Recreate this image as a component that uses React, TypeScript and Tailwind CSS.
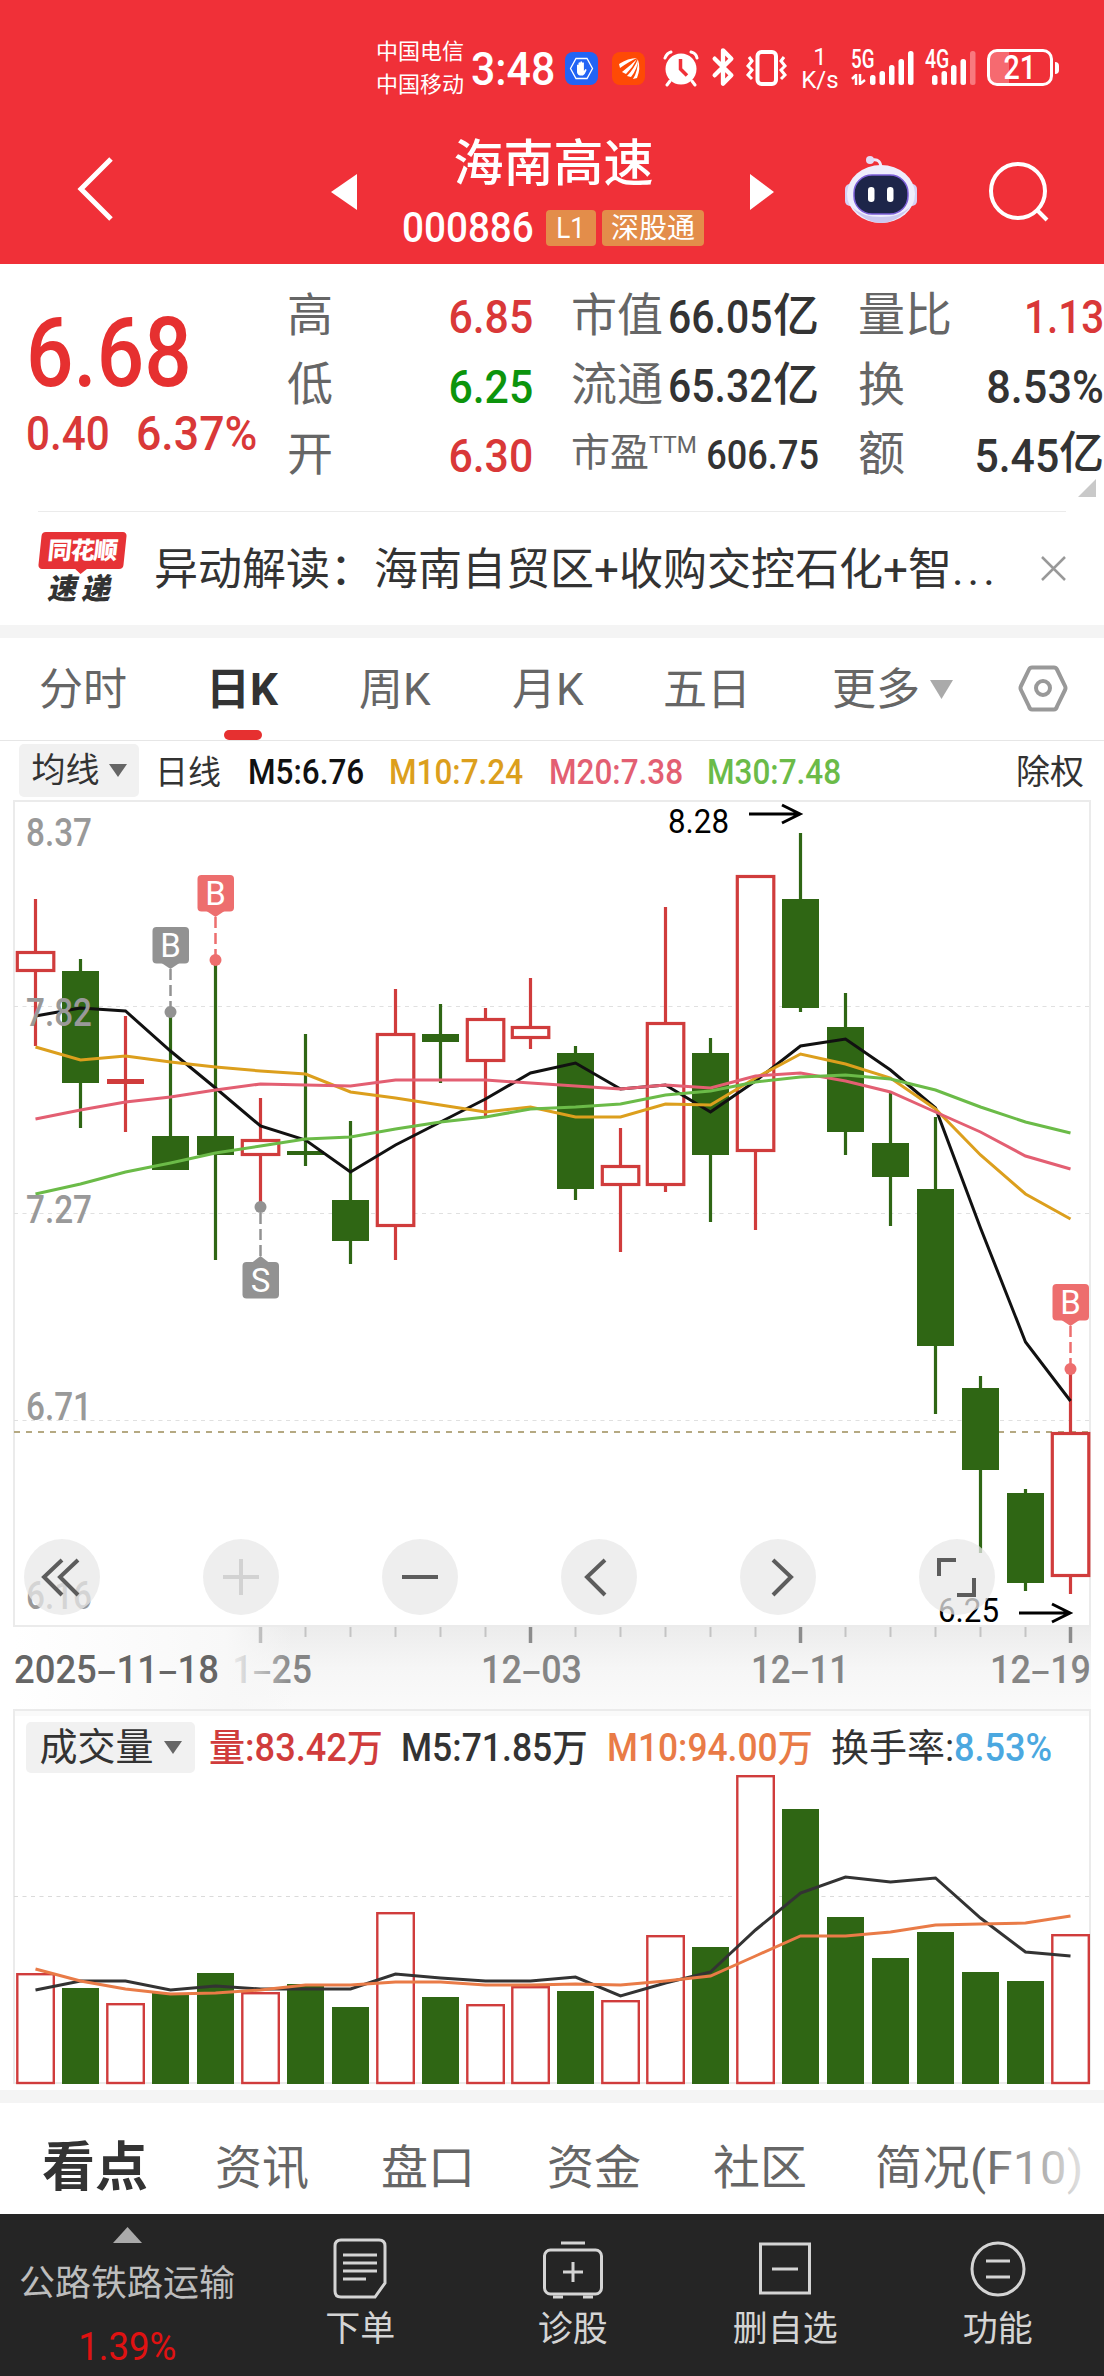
import React from "react";
import { Bluetooth } from "lucide-react";

type Candle = { up: boolean; high: number; top: number; bottom: number; low: number; vol: number };

const c = (up: boolean, high: number, top: number, bottom: number, low: number, vol: number): Candle => ({
  up, high, top, bottom, low, vol,
});

const candles: Candle[] = [
  c(true, 899, 951, 972, 1046, 1973),
  c(false, 959, 971, 1083, 1128, 1988),
  c(true, 1016, 1079, 1084, 1132, 2003),
  c(false, 1012, 1136, 1170, 1170, 1993),
  c(false, 959, 1136, 1155, 1260, 1973),
  c(true, 1098, 1139, 1156, 1207, 1992),
  c(false, 1034, 1151, 1155, 1166, 1984),
  c(false, 1121, 1200, 1241, 1264, 2007),
  c(true, 989, 1033, 1227, 1260, 1912),
  c(false, 1004, 1034, 1042, 1083, 1997),
  c(true, 1008, 1018, 1062, 1116, 2004),
  c(true, 978, 1026, 1039, 1049, 1986),
  c(false, 1046, 1053, 1189, 1200, 1991),
  c(true, 1128, 1165, 1186, 1252, 2000),
  c(true, 907, 1022, 1186, 1192, 1935),
  c(false, 1038, 1053, 1155, 1222, 1947),
  c(true, 875, 875, 1152, 1230, 1775),
  c(false, 833, 899, 1008, 1012, 1809),
  c(false, 993, 1027, 1132, 1155, 1917),
  c(false, 1093, 1143, 1177, 1226, 1958),
  c(false, 1117, 1189, 1346, 1414, 1932),
  c(false, 1376, 1388, 1470, 1553, 1972),
  c(false, 1489, 1493, 1583, 1591, 1981),
  c(true, 1369, 1432, 1577, 1594, 1934),
];

const priceLines = [
  {
    color: "#111111",
    ys: [1016, 1008, 1011, 1051, 1088, 1126, 1140, 1172, 1145, 1122, 1099, 1073, 1063, 1089, 1085, 1112, 1081, 1046, 1039, 1070, 1108, 1228, 1342, 1401],
  },
  {
    color: "#dc9f1d",
    ys: [1047, 1060, 1056, 1062, 1067, 1071, 1074, 1092, 1098, 1105, 1112, 1107, 1117, 1117, 1104, 1105, 1078, 1054, 1064, 1078, 1109, 1155, 1194, 1219],
  },
  {
    color: "#e35f72",
    ys: [1119, 1110, 1102, 1097, 1090, 1084, 1085, 1086, 1080, 1080, 1080, 1083, 1086, 1089, 1085, 1088, 1076, 1073, 1081, 1092, 1112, 1132, 1156, 1169],
  },
  {
    color: "#6bbb48",
    ys: [1194, 1184, 1172, 1163, 1153, 1146, 1139, 1137, 1129, 1122, 1117, 1109, 1107, 1104, 1095, 1091, 1082, 1077, 1075, 1079, 1090, 1107, 1122, 1133],
  },
];

const volLines = [
  {
    color: "#333333",
    ys: [1990, 1981, 1981, 1990, 1986, 1989, 1989, 1989, 1974, 1978, 1981, 1981, 1977, 1996, 1983, 1972, 1930, 1893, 1877, 1882, 1878, 1918, 1952, 1956],
  },
  {
    color: "#e97b47",
    ys: [1969, 1981, 1989, 1994, 1993, 1990, 1985, 1985, 1982, 1982, 1985, 1985, 1984, 1985, 1981, 1976, 1956, 1936, 1936, 1932, 1925, 1924, 1923, 1916],
  },
];

const RED = "#d03c3c";
const GREEN = "#2f6614";

const cx = (i: number) => 35.5 + i * 45;
const toPoints = (ys: number[]) => ys.map((y, i) => `${cx(i)},${y}`).join(" ");

// horizontally condensed run of digits
const Num = ({ children, className = "scale-x-[0.87]" }: { children: React.ReactNode; className?: string }) => (
  <span className={`inline-block whitespace-nowrap ${className}`}>{children}</span>
);

const SignalBars = ({ last }: { last: string }) => (
  <svg width="44" height="34" viewBox="0 0 44 34" fill="#fff">
    <rect x="0" y="24" width="5.5" height="10" rx="2.5" />
    <rect x="9.5" y="20" width="5.5" height="14" rx="2.5" />
    <rect x="19" y="14" width="5.5" height="20" rx="2.5" />
    <rect x="28.5" y="8" width="5.5" height="26" rx="2.5" />
    <rect x="38" y="0" width="5.5" height="34" rx="2.5" fill={last} />
  </svg>
);

const StatusBar = () => (
  <div className="flex h-[120px] items-start pl-[376px] pt-[38px] text-white">
    <div className="flex w-[95px] flex-col gap-[11px] pt-[3px] text-[22px] leading-[22px]">
      <span>中国电信</span>
      <span>中国移动</span>
    </div>
    <div className="w-[94px] pt-[8px] text-[46px] font-medium leading-[46px]">
      <Num className="origin-left scale-x-[0.93]">3:48</Num>
    </div>
    <svg className="mt-[13px]" width="34" height="36" viewBox="0 0 34 36">
      <rect x="0" y="1" width="33" height="33" rx="8" fill="#2264f5" />
      <path d="M11 7.500h11l5.500 10-5.500 10H11L5.500 17.500z" fill="none" stroke="#fff" strokeWidth="1.300" />
      <path d="M12 17v-3q1-1 1.500 0v2-4q1-1.500 1.800 0v-1q1-1.300 1.800 0v1q1-1.300 1.800 0v8l1.500-2q1.600 0 1 1.500-1.500 4-3.500 5h-3q-3-1-2.900-4z" fill="#fff" />
    </svg>
    <svg className="ml-[13px] mt-[13px]" width="34" height="36" viewBox="0 0 34 36">
      <rect x="0" y="1" width="33" height="33" rx="8" fill="#fe4a05" />
      <path d="M7 13q9-6 18-6-7 3-17 10zM10 21q9-7 15-13-4 8-11 15zM15 25q7-7 11-17 0 9-7 18zM21 28q5-8 5-19 3 8-1 18z" fill="#fff" />
    </svg>
    <svg className="ml-[17px] mt-[12px]" width="38" height="37" viewBox="0 0 38 37">
      <circle cx="18" cy="19" r="15.500" fill="#fff" />
      <path d="M17.500 9v10l6.500 6.500" fill="none" stroke="#f03038" strokeWidth="3.500" />
      <path d="M2 8q2-5 6-6M28 2q5 1 6 6M7 31l-3 4M29 31l3 4" stroke="#fff" strokeWidth="3" strokeLinecap="round" fill="none" />
    </svg>
    <Bluetooth className="ml-[2px] mt-[9px] shrink-0" size={40} strokeWidth={2.6} />
    <svg className="ml-[2px] mt-[12px]" width="44" height="36" viewBox="0 0 44 36" fill="none" stroke="#fff">
      <rect x="12.500" y="2" width="18.500" height="32" rx="4" strokeWidth="4" />
      <path d="M4 7l3 4-4 5 4 4-4 5 4 4M39 7l-3 4 4 5-4 4 4 5-4 4" strokeWidth="3" />
    </svg>
    <div className="ml-[12px] mt-[8px] flex w-[38px] flex-col items-center text-[24px] leading-[23px]">
      <span>1</span>
      <span>K/s</span>
    </div>
    <div className="relative ml-[31px] mt-[13px]">
      <SignalBars last="#fff" />
      <span className="absolute -left-[19px] -top-[3px] text-[25px] font-medium leading-[23px]">
        <Num className="origin-left scale-x-[0.75]">5G</Num>
      </span>
      <svg className="absolute -left-[19px] top-[23px]" width="17" height="11" viewBox="0 0 17 11" fill="none" stroke="#fff" strokeWidth="2.500">
        <path d="M1 5l4-4v10M9 0v10l5-4" />
      </svg>
    </div>
    <div className="relative ml-[18px] mt-[13px]">
      <SignalBars last="#f8797e" />
      <span className="absolute -left-[7px] -top-[3px] text-[25px] font-medium leading-[23px]">
        <Num className="origin-left scale-x-[0.78]">4G</Num>
      </span>
    </div>
    <div className="ml-[11px] mt-[11px] flex items-center">
      <div className="flex h-[37px] w-[66px] items-center justify-center rounded-[10px] border-[3px] border-white bg-linear-to-r from-[#f66a70] from-32% to-transparent to-32% text-[33px] font-medium leading-none">
        <Num>21</Num>
      </div>
      <div className="ml-[2px] h-3 w-1 rounded-r bg-white" />
    </div>
  </div>
);

const Robot = () => (
  <svg width="74" height="70" viewBox="0 0 74 70">
    <path d="M28 5q9-2 9 9" fill="none" stroke="#f0e8fa" strokeWidth="3" />
    <circle cx="26" cy="5" r="4" fill="#e4dcf6" />
    <rect x="1" y="29" width="10" height="22" rx="5" fill="#d5d1f5" />
    <rect x="63" y="29" width="10" height="22" rx="5" fill="#d5d1f5" />
    <ellipse cx="37" cy="39" rx="34" ry="29" fill="#eeedfc" />
    <path d="M8 52q12 15 29 16 17-1 29-16-10 10-29 10T8 52z" fill="#cbc8f0" />
    <rect x="10" y="20" width="54" height="39" rx="18" fill="#1d2549" stroke="#7c5fd8" strokeWidth="1.500" />
    <rect x="24" y="32" width="6.500" height="15" rx="3.200" fill="#fff" />
    <rect x="43" y="32" width="6.500" height="15" rx="3.200" fill="#fff" />
  </svg>
);

const Header = () => (
  <header className="h-[264px] bg-[#f03038]">
    <StatusBar />
    <div className="flex h-[144px] text-white">
      <svg className="ml-[73px] mt-[36px]" width="44" height="66" viewBox="0 0 44 66">
        <path d="M38 3L8 33l30 30" fill="none" stroke="#fff" strokeWidth="5" />
      </svg>
      <svg className="ml-[214px] mt-[54px]" width="26" height="36" viewBox="0 0 26 36">
        <path d="M26 0v36L0 18z" fill="#fff" />
      </svg>
      <div className="flex w-[393px] flex-col items-center">
        <h1 className="mt-[19px] text-[50px] font-medium leading-[50px]">海南高速</h1>
        <div className="mt-[21px] flex w-full items-center pl-[45px]">
          <div className="w-[144px] text-[42px] font-medium leading-[36px]">
            <Num className="origin-left scale-x-[0.92]">000886</Num>
          </div>
          <div className="h-9 w-[50px] rounded-[4px] bg-[#e38d4a] text-center text-[30px] leading-[36px]">
            <Num>L1</Num>
          </div>
          <div className="ml-[6px] h-9 w-[102px] rounded-[4px] bg-[#e38d4a] text-center text-[28px] leading-[37px]">深股通</div>
        </div>
      </div>
      <svg className="mt-[54px]" width="24" height="36" viewBox="0 0 24 36">
        <path d="M0 0v36l24-18z" fill="#fff" />
      </svg>
      <div className="ml-[70px] mt-[35px]">
        <Robot />
      </div>
      <svg className="ml-[70px] mt-[40px]" width="64" height="64" viewBox="0 0 64 64" fill="none" stroke="#fff" strokeWidth="4">
        <circle cx="30" cy="31" r="27" />
        <path d="M49 50l10 10" />
      </svg>
    </div>
  </header>
);

const priceCol = [
  { label: "高", value: "6.85", color: "text-[#d93838]" },
  { label: "低", value: "6.25", color: "text-[#0c940c]" },
  { label: "开", value: "6.30", color: "text-[#d93838]" },
];

const Quote = () => (
  <section className="relative flex h-[247px] whitespace-nowrap text-[#333]">
    <div className="w-[287px] pl-[26px]">
      <div className="mt-[41px] h-[96px] text-[96px] font-medium leading-[96px] text-[#e63030]">
        <Num className="origin-left scale-x-[0.87]">6.68</Num>
      </div>
      <div className="mt-[9px] flex text-[48px] font-medium leading-[48px] text-[#d93838]">
        <div className="w-[110px]">
          <Num className="origin-left scale-x-[0.88]">0.40</Num>
        </div>
        <Num className="origin-left scale-x-[0.93]">6.37%</Num>
      </div>
    </div>
    <div className="flex w-[246px] flex-col pt-[16px]">
      {priceCol.map((row) => (
        <div key={row.label} className="flex h-[69.5px] items-center justify-between text-[47px] leading-none">
          <span className="text-[46px] text-[#666]">{row.label}</span>
          <Num className={`origin-right scale-x-[0.91] pt-1 font-medium ${row.color}`}>{row.value}</Num>
        </div>
      ))}
    </div>
    <div className="ml-[38px] flex w-[248px] flex-col pt-[16px] text-[46px] leading-none">
      {[
        ["市值", "66.05"],
        ["流通", "65.32"],
      ].map(([label, value]) => (
        <div key={label} className="flex h-[69.5px] items-center">
          <span className="w-[98px] text-[#666]">{label}</span>
          <Num className="w-[103px] origin-left scale-x-[0.89] pt-1 font-medium">{value}</Num>
          <span className="ml-[2px] font-medium">亿</span>
        </div>
      ))}
      <div className="flex h-[69.5px] items-center">
        <span className="text-[39px] text-[#666]">市盈</span>
        <span className="mb-[16px] text-[23px] leading-none text-[#666]">TTM</span>
        <div className="flex min-w-0 flex-1 justify-end pt-1 text-[41px] font-medium">
          <Num className="origin-right scale-x-[0.88]">606.75</Num>
        </div>
      </div>
    </div>
    <div className="ml-[39px] flex w-[246px] flex-col pt-[16px] text-[47px] leading-none">
      <div className="flex h-[69.5px] items-center justify-between">
        <span className="text-[#666]">量比</span>
        <Num className="origin-right scale-x-[0.86] pt-1 font-medium text-[#d93838]">1.13</Num>
      </div>
      <div className="flex h-[69.5px] items-center justify-between">
        <span className="text-[#666]">换</span>
        <Num className="origin-right scale-x-[0.92] pt-1 font-medium">8.53%</Num>
      </div>
      <div className="flex h-[69.5px] items-center">
        <span className="text-[#666]">额</span>
        <Num className="ml-auto origin-right scale-x-[0.91] pt-1 font-medium">5.45</Num>
        <span className="text-[45px] font-medium">亿</span>
      </div>
    </div>
    <svg className="absolute right-[8px] top-[215px]" width="18" height="18" viewBox="0 0 18 18">
      <path d="M18 0v18H0z" fill="#c9c9c9" />
    </svg>
  </section>
);

const News = () => (
  <section className="mx-[38px] flex h-[114px] items-start border-t border-[#ebebeb] text-[#333]">
    <div className="mt-[20px] w-[90px]">
      <div className="relative ml-[2px] flex h-[37px] w-[85px] -skew-x-6 items-center justify-center rounded-[4px] bg-[#e63236] text-[24px] font-black leading-none tracking-[-1px] text-white">
        同花顺
        <svg className="absolute -bottom-[5px] left-[36px]" width="14" height="6" viewBox="0 0 14 6">
          <path d="M0 0h14L7 6z" fill="#e63236" />
        </svg>
      </div>
      <div className="ml-[11px] mt-[6px] flex -skew-x-12 gap-[5px] text-[29px] font-black leading-[29px]">
        <span>速</span>
        <span>递</span>
      </div>
    </div>
    <p className="ml-[26px] mt-[35px] w-[860px] whitespace-nowrap text-[44px] leading-[46px]">
      异动解读：海南自贸区+收购交控石化+智<span className="tracking-[4px]">...</span>
    </p>
    <svg className="ml-auto mt-[44px]" width="25" height="25" viewBox="0 0 25 25" stroke="#999" strokeWidth="2.500">
      <path d="M1 1l23 23M24 1L1 24" />
    </svg>
  </section>
);

const periods = [
  { label: "分时", width: "w-[167px]" },
  { label: "日K", width: "w-[153px]", active: true },
  { label: "周K", width: "w-[153px]" },
  { label: "月K", width: "w-[151px]" },
  { label: "五日", width: "w-[169px]" },
];

const PeriodTabs = () => (
  <nav className="flex h-[103px] border-b border-[#e6e6e6] pl-[39px] text-[44px] leading-[44px] text-[#666]">
    {periods.map((p) => (
      <div key={p.label} className={`relative pt-[30px] ${p.width} ${p.active ? "font-bold text-[#333]" : ""}`}>
        {p.label}
        {p.active && <span className="absolute bottom-0 left-[18px] h-[10px] w-[38px] rounded-full bg-[#e63030]" />}
      </div>
    ))}
    <div className="flex items-start pt-[30px]">更多</div>
    <svg className="ml-[10px] mt-[42px]" width="23" height="19" viewBox="0 0 23 19">
      <path d="M0 0h23L11.500 19z" fill="#aaa" />
    </svg>
    <svg className="ml-[65px] mt-[27px]" width="50" height="47" viewBox="0 0 50 47" fill="none" stroke="#999" strokeWidth="4">
      <path d="M14 2.500h22q2 0 3 2l8 16.500q1 2 0 4l-8 16.500q-1 3-3 3H14q-2 0-3-3L3 25q-1-2 0-4l8-16.500q1-2 3-2z" />
      <circle cx="25" cy="23" r="7" />
    </svg>
  </nav>
);

const Caret = () => (
  <svg width="18" height="13" viewBox="0 0 18 13">
    <path d="M0 0h18L9 13z" fill="#666" />
  </svg>
);

const AverageRow = () => (
  <div className="flex h-[59px] items-start pl-[19px] pt-[3px] text-[35px] leading-[57px] text-[#333]">
    <div className="flex h-[53px] w-[120px] items-center justify-center gap-[9px] rounded-[5px] bg-[#f1f1f1] text-[34px]">
      均线
      <Caret />
    </div>
    <div className="ml-[16px] w-[93px] text-[33px]">日线</div>
    <div className="w-[141px] font-medium text-[#111]">
      <Num className="origin-left scale-x-[0.9]">M5:6.76</Num>
    </div>
    <div className="w-[160px] font-medium text-[#dc9f1d]">
      <Num className="origin-left scale-x-[0.9]">M10:7.24</Num>
    </div>
    <div className="w-[158px] font-medium text-[#e35f72]">
      <Num className="origin-left scale-x-[0.9]">M20:7.38</Num>
    </div>
    <div className="w-[309px] font-medium text-[#6bbb48]">
      <Num className="origin-left scale-x-[0.9]">M30:7.48</Num>
    </div>
    <div className="text-[34px]">除权</div>
  </div>
);

const Marker = ({ x, y, dot, letter, color }: { x: number; y: number; dot: number; letter: string; color: string }) => {
  const below = y > dot;
  const tip = below ? y - 6 : y + 42;
  return (
    <g>
      <circle cx={x} cy={dot} r="6" fill={color} />
      <path d={`M${x} ${tip}V${dot}`} stroke={color} strokeWidth="2.500" strokeDasharray="11 5" />
      <rect x={x - 18} y={y} width="36.500" height="36.500" rx="4" fill={color} />
      <path d={below ? `M${x - 9} ${y + 1}h18l-9-7z` : `M${x - 9} ${y + 36}h18l-9 6z`} fill={color} />
      <text x={x} y={y + 30} textAnchor="middle" fontSize="33" fill="#fff">
        {letter}
      </text>
    </g>
  );
};

const Fit = ({ x, y, w, size, fill, children }: { x: number; y: number; w: number; size: number; fill: string; children: string }) => (
  <text x={x} y={y} textLength={w} lengthAdjust="spacingAndGlyphs" fontSize={size} fill={fill}>
    {children}
  </text>
);

const PriceChart = () => (
  <svg className="block overflow-visible" width="1104" height="827" viewBox="0 800 1104 827">
    <rect x="14" y="801" width="1076" height="825" fill="none" stroke="#ebebeb" strokeWidth="2" />
    {[1006.5, 1213.5, 1420.5].map((y) => (
      <path key={y} d={`M14 ${y}H1090`} stroke="#e0e0e0" strokeWidth="1.200" strokeDasharray="4 4.500" />
    ))}
    <path d="M14 1432H1090" stroke="#b5a982" strokeWidth="2" strokeDasharray="6 6" />
    {candles.map((k, i) => {
      const x = cx(i);
      const color = k.up ? RED : GREEN;
      const hollow = k.up && k.bottom - k.top > 6;
      return (
        <g key={i}>
          <path d={`M${x} ${k.high}V${k.top}M${x} ${k.bottom}V${k.low}`} stroke={color} strokeWidth="3.200" />
          {hollow ? (
            <rect x={x - 18.200} y={k.top + 1.500} width="36.500" height={k.bottom - k.top - 3} fill="#fff" stroke={color} strokeWidth="3.200" />
          ) : (
            <rect x={x - 18.500} y={k.top} width="37" height={k.bottom - k.top} fill={color} />
          )}
        </g>
      );
    })}
    {priceLines.map((l) => (
      <polyline key={l.color} points={toPoints(l.ys)} fill="none" stroke={l.color} strokeWidth="3" />
    ))}
    <g fontWeight="500">
      <Fit x={26} y={846} w={66} size={38} fill="#999">8.37</Fit>
      <Fit x={26} y={1026} w={66} size={38} fill="#999">7.82</Fit>
      <Fit x={26} y={1223} w={66} size={38} fill="#999">7.27</Fit>
      <Fit x={26} y={1420} w={66} size={38} fill="#999">6.71</Fit>
      <Fit x={26} y={1609} w={66} size={38} fill="#999">6.16</Fit>
    </g>
    <Fit x={668} y={833} w={61} size={33} fill="#000">8.28</Fit>
    <path d="M749 814h50M782 805l18 9-18 9" fill="none" stroke="#000" strokeWidth="3" />
    <Fit x={938} y={1622} w={61} size={33} fill="#000">6.25</Fit>
    <path d="M1019 1613h50M1052 1604l18 9-18 9" fill="none" stroke="#000" strokeWidth="3" />
    <Marker x={170.500} y={927} dot={1012} letter="B" color="#929292" />
    <Marker x={215.500} y={875} dot={960} letter="B" color="#ed6e6e" />
    <Marker x={260.500} y={1262} dot={1207} letter="S" color="#929292" />
    <Marker x={1070.500} y={1284} dot={1369} letter="B" color="#ed6e6e" />
  </svg>
);

const toolIcons = [
  { d: "M38 21L20 38l18 18M54 21L36 38l18 18", dim: false },
  { d: "M38 20v36M20 38h36", dim: true },
  { d: "M20 38h36", dim: false },
  { d: "M44 21L26 38l18 18", dim: false },
  { d: "M33 21l18 17-18 18", dim: false },
  { d: "M20 37V21h17M38 56h17V39", dim: false },
];

const ChartTools = () => (
  <div className="absolute left-[24px] top-[739px] flex gap-[103px]">
    {toolIcons.map((t) => (
      <button key={t.d} className="size-[76px] rounded-full bg-[#e8e8e8]/75">
        <svg width="76" height="76" viewBox="0 0 76 76" fill="none" stroke={t.dim ? "#d2d2d2" : "#5c5c5c"} strokeWidth="4">
          <path d={t.d} />
        </svg>
      </button>
    ))}
  </div>
);

const DateAxis = () => (
  <svg className="block" width="1104" height="82" viewBox="0 1627 1104 82">
    <defs>
      <linearGradient id="strip" x1="0" y1="0" x2="0" y2="1">
        <stop offset="0" stopColor="#ececec" />
        <stop offset="0.500" stopColor="#f6f6f6" />
        <stop offset="1" stopColor="#fafafa" />
      </linearGradient>
      <linearGradient id="fade" x1="0" y1="0" x2="1" y2="0">
        <stop offset="0" stopColor="#fff" />
        <stop offset="0.760" stopColor="#f8f8f8" />
        <stop offset="1" stopColor="#f6f6f6" stopOpacity="0" />
      </linearGradient>
    </defs>
    <rect x="14" y="1627" width="1077" height="82" fill="url(#strip)" />
    {candles.map((_, i) => {
      if (i < 5) return null;
      const major = (i - 5) % 6 === 0;
      return (
        <path key={i} d={`M${cx(i)} 1627V${major ? 1643 : 1637}`} stroke={major ? "#8c8c8c" : "#c4c4c4"} strokeWidth={major ? 3.500 : 2} />
      );
    })}
    <g fontWeight="500">
      <Fit x={212} y={1683} w={100} size={38} fill="#858585">11‒25</Fit>
      <Fit x={481} y={1683} w={101} size={38} fill="#858585">12‒03</Fit>
      <Fit x={751} y={1683} w={98} size={38} fill="#858585">12‒11</Fit>
      <Fit x={990} y={1683} w={101} size={38} fill="#858585">12‒19</Fit>
      <rect x="13" y="1627" width="280" height="82" fill="url(#fade)" />
      <Fit x={14} y={1683} w={205} size={38} fill="#666">2025‒11‒18</Fit>
    </g>
  </svg>
);

const VolumePanel = () => (
  <section className="relative h-[381px]">
    <svg className="block" width="1104" height="381" viewBox="0 1709 1104 381">
      <rect x="14" y="1710" width="1076" height="6" fill="#fafafa" />
      <rect x="14" y="1710" width="1076" height="373" fill="none" stroke="#ebebeb" strokeWidth="2" />
      <path d="M14 1896.500H1090" stroke="#dadada" strokeWidth="1.200" strokeDasharray="4 4.500" />
      {candles.map((k, i) =>
        k.up ? (
          <rect key={i} x={cx(i) - 18.200} y={k.vol + 1.200} width="36.500" height={2083 - k.vol - 1.200} fill="#fff" stroke={RED} strokeWidth="2.400" />
        ) : (
          <rect key={i} x={cx(i) - 18.500} y={k.vol} width="37" height={2084 - k.vol} fill={GREEN} />
        )
      )}
      {volLines.map((l) => (
        <polyline key={l.color} points={toPoints(l.ys)} fill="none" stroke={l.color} strokeWidth="3" />
      ))}
    </svg>
    <div className="absolute left-[26px] top-[13px] flex whitespace-nowrap text-[38px] font-medium leading-[53px] text-[#333]">
      <div className="flex h-[51px] w-[169px] items-center justify-center gap-[10px] rounded-[5px] bg-[#f1f1f1] font-normal">
        成交量
        <Caret />
      </div>
      <div className="ml-[14px] w-[192px] text-[#d03c3c]">
        <Num className="origin-left scale-x-[0.95]">量:83.42万</Num>
      </div>
      <div className="w-[206px]">
        <Num className="origin-left scale-x-[0.935]">M5:71.85万</Num>
      </div>
      <div className="w-[224px] text-[#e97b47]">
        <Num className="origin-left scale-x-[0.93]">M10:94.00万</Num>
      </div>
      <div className="w-[123px] font-normal">换手率:</div>
      <div className="text-[#4ba8e0]">
        <Num className="origin-left scale-x-[0.95]">8.53%</Num>
      </div>
    </div>
  </section>
);

const InfoTabs = () => (
  <nav className="relative flex h-[111px] items-center pl-[42px] pt-[17px] text-[47px] leading-none text-[#666]">
    <span className="w-[173px] pt-[2px] text-[53px] font-bold text-[#333]">看点</span>
    <span className="w-[166px]">资讯</span>
    <span className="w-[166px]">盘口</span>
    <span className="w-[166px]">资金</span>
    <span className="w-[162px]">社区</span>
    <span className="whitespace-nowrap tracking-[0.5px]">简况(F10)</span>
    <div className="absolute right-0 top-0 h-full w-[120px] bg-linear-to-r from-transparent to-white" />
  </nav>
);

const actions = [
  {
    label: "下单",
    icon: (
      <>
        <path d="M11 4h38q6 0 6 6v37L45 61H11q-6 0-6-6V10q0-6 6-6z" />
        <path d="M13 19h34M13 27h34M13 35h34M13 43h23" />
      </>
    ),
  },
  {
    label: "诊股",
    icon: (
      <>
        <rect x="1.500" y="14" width="57" height="44" rx="6" />
        <path d="M18 7h24M30 26v20M20 36h20M10 61h10M40 61h10" />
      </>
    ),
  },
  {
    label: "删自选",
    icon: (
      <>
        <rect x="5.500" y="8" width="49" height="49" />
        <path d="M17 33h26" />
      </>
    ),
  },
  {
    label: "功能",
    icon: (
      <>
        <circle cx="30" cy="33" r="26" />
        <path d="M18 25h24M18 41h24" />
      </>
    ),
  },
];

const BottomBar = () => (
  <footer className="flex h-[162px] bg-[#252525] text-[#d4d4d4]">
    <div className="flex w-[254px] flex-col items-center pt-[13px]">
      <svg width="29" height="16" viewBox="0 0 29 16">
        <path d="M14.500 0L29 16H0z" fill="#aaa" />
      </svg>
      <span className="mt-[22px] text-[36px] leading-[38px] text-[#bdbdbd]">公路铁路运输</span>
      <span className="mt-[25px] text-[39px] leading-[38px] text-[#e01212]">
        <Num className="scale-x-[0.94]">1.39%</Num>
      </span>
    </div>
    {actions.map((a) => (
      <div key={a.label} className="flex w-[212.5px] flex-col items-center pt-[22px]">
        <svg width="62" height="66" viewBox="0 0 60 66" fill="none" stroke="#d4d4d4" strokeWidth="3">
          {a.icon}
        </svg>
        <span className="mt-[10px] text-[35px] leading-[36px]">{a.label}</span>
      </div>
    ))}
  </footer>
);

const App = () => {
  return (
    <main className="h-[2376px] w-[1104px] overflow-hidden bg-white font-['Roboto','Noto_Sans_CJK_SC',sans-serif]">
      <Header />
      <Quote />
      <News />
      <div className="h-[13px] bg-[#f4f4f4]" />
      <PeriodTabs />
      <AverageRow />
      <div className="relative">
        <PriceChart />
        <ChartTools />
      </div>
      <DateAxis />
      <VolumePanel />
      <div className="h-[13px] bg-[#f4f4f4]" />
      <InfoTabs />
      <BottomBar />
    </main>
  );
};

export default App;
